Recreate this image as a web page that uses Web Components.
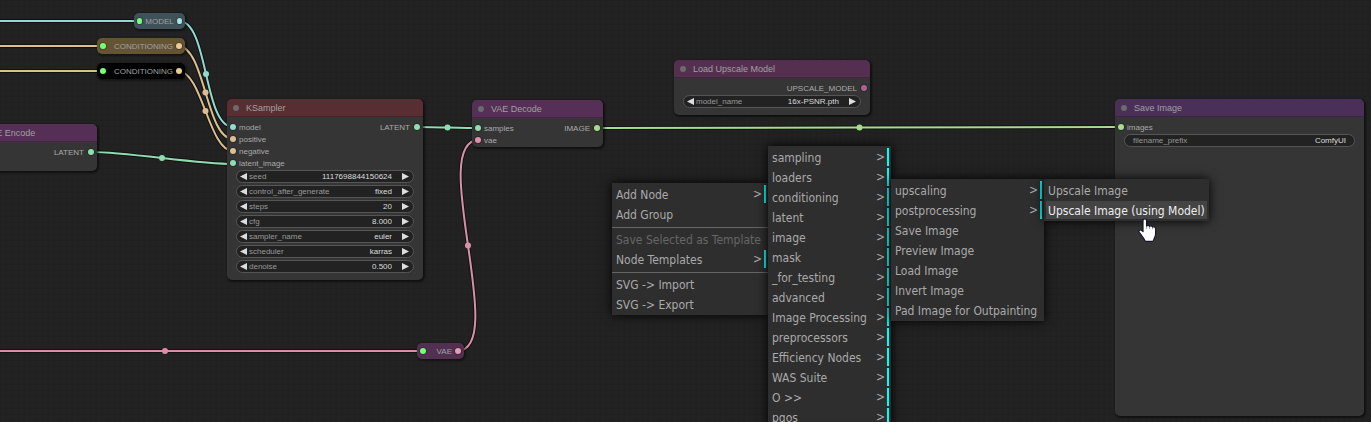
<!DOCTYPE html>
<html lang="en">
<head>
<meta charset="utf-8">
<title>ComfyUI</title>
<style>
html, body { margin: 0; height: 100%; background: #222; }
</style>
</head>
<body>
<graph-app></graph-app>
<script>
const define = (name, html, init) => {
  const tpl = document.createElement('template');
  tpl.innerHTML = html;
  customElements.define(name, class extends HTMLElement {
    connectedCallback() {
      if (this.shadowRoot) return;
      this.attachShadow({ mode: 'open' }).append(tpl.content.cloneNode(true));
      if (init) init(this, this.shadowRoot);
    }
  });
};

/* One input or output of a node */
define('node-slot', `
<style>
:host { display: flex; align-items: center; gap: 3px; height: 12px; padding: 0 3px; color: #aaa; }
:host([output]) { flex-direction: row-reverse; gap: 4px; }
i { width: 6px; height: 6px; border-radius: 50%; box-shadow: 0 0 0 1px rgba(0,0,0,.2); }
span { white-space: nowrap; padding-top: 2px; }
</style>
<i></i><span><slot></slot></span>`,
(el, root) => root.querySelector('i').style.background = el.getAttribute('color'));

/* Value row: number, combo or text */
define('node-widget', `
<style>
:host { display: flex; align-items: center; box-sizing: border-box; height: 13px; padding: 0 4px 0 3px; gap: 2px;
  background: #222; border: 1px solid #555; border-radius: 7px; color: #999; }
:host([type=text]) { padding: 0 8px; }
button { width: 7px; height: 7px; flex: none; padding: 0; border: 0; background: #ddd; clip-path: polygon(0 0, 100% 50%, 0 100%); }
button.prev { clip-path: polygon(100% 0, 0 50%, 100% 100%); }
:host([type=text]) button { display: none; }
label { flex: none; }
input, select { flex: 1; min-width: 0; width: 0; height: 11px; margin: 0; padding: 0; border: 0; outline: 0; background: none;
  appearance: none; color: #ddd; font: inherit; line-height: 11px; text-align: right; text-align-last: right; }
.next { margin-left: 8px; }
</style>
<button class="prev" aria-label="Previous"></button><label for="v"></label><button class="next" aria-label="Next"></button>`,
(el, root) => {
  const label = root.querySelector('label');
  label.textContent = el.getAttribute('name');
  const value = el.getAttribute('value');
  let field;
  if (el.getAttribute('type') === 'combo') {
    field = document.createElement('select');
    field.add(new Option(value, value));
  } else {
    field = document.createElement('input');
    field.type = 'text';
    field.setAttribute('value', value);
  }
  field.id = 'v';
  label.after(field);
});

/* Expanded node */
define('graph-node', `
<style>
:host { display: flex; flex-direction: column; box-sizing: border-box; overflow: hidden; background: #353535;
  border-radius: 5px; box-shadow: 1px 1px 2px 1px rgba(0,0,0,.5); font: 8px/12px "Liberation Sans", Arial, sans-serif; }
header { display: flex; align-items: center; gap: 7px; height: 18px; padding: 0 6px; background: var(--title); color: #a0a0a0;
  font-size: 9px; border-bottom: 1px solid rgba(0,0,0,.2); box-sizing: border-box; flex: none; }
header i { width: 6px; height: 6px; border-radius: 50%; background: #6b6b6b; }
h2 { margin: 0; font: inherit; white-space: nowrap; }
.slots { display: flex; justify-content: space-between; padding: 4px 0 1px; }
.widgets { display: flex; flex-direction: column; gap: 2px; padding: 0 9px; }
</style>
<header><i></i><h2></h2></header>
<div class="slots"><div><slot name="in"></slot></div><div><slot name="out"></slot></div></div>
<div class="widgets"><slot></slot></div>`,
(el, root) => root.querySelector('h2').textContent = el.getAttribute('name'));

/* Collapsed reroute node */
define('reroute-node', `
<style>
:host { display: flex; align-items: center; justify-content: flex-end; gap: 3px; box-sizing: border-box; height: 16px; padding: 0 3px;
  border-radius: 5px; background: var(--body); box-shadow: 1px 1px 2px 1px rgba(0,0,0,.4); color: #a0a0a0; font: 8px/12px "Liberation Sans", Arial, sans-serif; }
i { width: 6px; height: 6px; border-radius: 50%; box-shadow: 0 0 0 1px rgba(0,0,0,.2); }
span { padding-top: 2px; }
.in { margin-right: auto; background: #7f7; }
.out { background: var(--slot); }
</style>
<i class="in"></i><span><slot></slot></span><i class="out"></i>`);

define('menu-item', `
<style>
:host { display: block; }
button { display: flex; justify-content: space-between; gap: 6px; box-sizing: border-box; width: 100%; height: 18px; padding: 0 2px;
  border: 0; background: none; color: #aaa; font: inherit; text-align: left; white-space: nowrap; line-height: 20px; }
:host([sub]) button { border-right: 2px solid #0ff; }
:host([sub]) button::after { content: ">"; line-height: 18px; }
:host([off]) button { color: #666; }
:host([active]) button { background: #444; color: #eee; }
</style>
<button role="menuitem"><span><slot></slot></span></button>`,
(el, root) => { if (el.hasAttribute('off')) root.querySelector('button').setAttribute('aria-disabled', 'true'); });

define('menu-line', `<style>:host { display: block; height: 2px; margin: 0 -2px; border-bottom: 1px solid #666; }</style>`);

define('context-menu', `
<style>
:host { display: flex; flex-direction: column; gap: 2px; box-sizing: border-box; padding: 2px; background: #2e2e2e;
  box-shadow: 0 0 10px #000; font: 12px/18px "DejaVu Sans Condensed", Tahoma, sans-serif; }
</style>
<slot></slot>`);

define('hand-cursor', `
<style>:host { display: block; width: 20px; height: 25px; } svg { display: block; }</style>
<svg width="20" height="25" viewBox="0 0 20 25" aria-hidden="true">
<path d="M5 2.800C5 .4 8.600.4 8.600 2.800V8c.7-.8 2.500-.7 3 .4.8-.8 2.500-.6 3 .7 1-.7 3 0 3 1.700v5.200c0 1.800-.6 2.800-1.300 4-.6 1.100-.4 3.400-1.700 3.400H8c-1.200 0-1.400-1.600-2.200-2.800L1.300 14.400C.2 12.600 2 11.100 3.400 12.200L5 13.500z" fill="#fff" stroke="#16162a" stroke-width="1.200" stroke-linejoin="round"/>
<path d="M8.600 8v2.800M11.600 8.600v2.400M14.600 9.300v2" stroke="#16162a" stroke-opacity=".6" stroke-width=".7" fill="none"/>
</svg>`);

/* Cables between slots, with a dot at the middle of each */
define('graph-links', `
<style>:host { display: block; } svg { display: block; width: 100%; height: 100%; overflow: visible; }</style>
<svg aria-hidden="true"></svg>`,
(el, root) => {
  const links = [
    [-60, 21, 140, 21, '#92d9d0'], [-60, 46, 103, 46, '#dcbf90'], [-60, 71, 103, 71, '#dcbf90'],
    [179, 21, 233, 127, '#92d9d0'], [178, 46, 233, 139, '#dcbf90'], [178, 71, 233, 151, '#dcbf90'],
    [91, 152, 233, 164, '#8fdcb0'], [416, 127, 479, 128, '#8fdcb0'], [598, 128, 1121, 127, '#a6dc90'],
    [-93, 351, 423, 351, '#d890a8'], [457, 351, 479, 140, '#d890a8']
  ];
  root.querySelector('svg').innerHTML = links.map(([x1, y1, x2, y2, c]) => {
    const d = Math.hypot(x2 - x1, y2 - y1) / 4;
    const p = `M${x1} ${y1}C${x1 + d} ${y1} ${x2 - d} ${y2} ${x2} ${y2}`;
    const dot = (x1 + x2) / 2 > 100 ? `<circle cx="${(x1 + x2) / 2}" cy="${(y1 + y2) / 2}" r="3" fill="${c}"/>` : '';
    return `<path d="${p}" fill="none" stroke="#000" stroke-opacity=".5" stroke-width="4"/><path d="${p}" fill="none" stroke="${c}" stroke-width="2"/>${dot}`;
  }).join('');
});

define('graph-app', `
<style>
:host { display: block; position: relative; height: 100vh; overflow: hidden; background-color: #222;
  background-image: repeating-linear-gradient(90deg, #202020 0 1px, transparent 1px 6px), repeating-linear-gradient(#202020 0 1px, transparent 1px 6px); }
/* The graph is a free canvas: every node and menu carries its own place on it */
graph-links { position: absolute; inset: 0; }
graph-node, reroute-node, context-menu, hand-cursor { position: absolute; }
#model { left: 134px; top: 13px; width: 51px; --body: #3f5159; --slot: #a8e0e0; }
#pos { left: 97px; top: 38px; width: 88px; --body: #655434; --slot: #ecca98; }
#neg { left: 97px; top: 63px; width: 88px; --body: #000; --slot: #ecca98; }
#vae { left: 417px; top: 343px; width: 47px; --body: #523052; --slot: #e0a0b0; }
#encode { left: -34px; top: 124px; width: 131px; height: 47px; --title: #552f55; }
#sampler { left: 227px; top: 99px; width: 196px; height: 181px; --title: #592e32; }
#decode { left: 472px; top: 100px; width: 131px; height: 47px; --title: #552f55; }
#loader { left: 674px; top: 60px; width: 196px; height: 55px; --title: #552f50; }
#save { left: 1115px; top: 99px; width: 249px; height: 317px; --title: #4a2f58; }
#m1 { left: 612px; top: 183px; width: 156px; }
#m2 { left: 768px; top: 146px; width: 123px; }
#m3 { left: 891px; top: 179px; width: 153px; }
#m4 { left: 1044px; top: 179px; width: 165px; }
hand-cursor { left: 1138px; top: 218px; }
</style>
<graph-links></graph-links>
<reroute-node id="model">MODEL</reroute-node>
<reroute-node id="pos">CONDITIONING</reroute-node>
<reroute-node id="neg">CONDITIONING</reroute-node>
<reroute-node id="vae">VAE</reroute-node>
<graph-node id="encode" name="VAE Encode"><node-slot slot="out" output color="#8fe0b0">LATENT</node-slot></graph-node>
<graph-node id="sampler" name="KSampler">
  <node-slot slot="in" color="#92d9d0">model</node-slot>
  <node-slot slot="in" color="#dcbf90">positive</node-slot>
  <node-slot slot="in" color="#dcbf90">negative</node-slot>
  <node-slot slot="in" color="#8fdcb0">latent_image</node-slot>
  <node-slot slot="out" output color="#8fdcb0">LATENT</node-slot>
  <node-widget type="number" name="seed" value="1117698844150624"></node-widget>
  <node-widget type="combo" name="control_after_generate" value="fixed"></node-widget>
  <node-widget type="number" name="steps" value="20"></node-widget>
  <node-widget type="number" name="cfg" value="8.000"></node-widget>
  <node-widget type="combo" name="sampler_name" value="euler"></node-widget>
  <node-widget type="combo" name="scheduler" value="karras"></node-widget>
  <node-widget type="number" name="denoise" value="0.500"></node-widget>
</graph-node>
<graph-node id="decode" name="VAE Decode">
  <node-slot slot="in" color="#8fdcb0">samples</node-slot>
  <node-slot slot="in" color="#e090a8">vae</node-slot>
  <node-slot slot="out" output color="#a6dc90">IMAGE</node-slot>
</graph-node>
<graph-node id="loader" name="Load Upscale Model">
  <node-slot slot="out" output color="#b06090">UPSCALE_MODEL</node-slot>
  <node-widget type="combo" name="model_name" value="16x-PSNR.pth"></node-widget>
</graph-node>
<graph-node id="save" name="Save Image">
  <node-slot slot="in" color="#a6dc90">images</node-slot>
  <node-widget type="text" name="filename_prefix" value="ComfyUI"></node-widget>
</graph-node>
<context-menu id="m1" role="menu">
  <menu-item sub>Add Node</menu-item><menu-item>Add Group</menu-item><menu-line></menu-line>
  <menu-item off>Save Selected as Template</menu-item><menu-item sub>Node Templates</menu-item><menu-line></menu-line>
  <menu-item>SVG -&gt; Import</menu-item><menu-item>SVG -&gt; Export</menu-item>
</context-menu>
<context-menu id="m2" role="menu">
  <menu-item sub>sampling</menu-item><menu-item sub>loaders</menu-item><menu-item sub>conditioning</menu-item>
  <menu-item sub>latent</menu-item><menu-item sub>image</menu-item><menu-item sub>mask</menu-item>
  <menu-item sub>_for_testing</menu-item><menu-item sub>advanced</menu-item><menu-item sub>Image Processing</menu-item>
  <menu-item sub>preprocessors</menu-item><menu-item sub>Efficiency Nodes</menu-item><menu-item sub>WAS Suite</menu-item>
  <menu-item sub>O &gt;&gt;</menu-item><menu-item sub>pqos</menu-item>
</context-menu>
<context-menu id="m3" role="menu">
  <menu-item sub>upscaling</menu-item><menu-item sub>postprocessing</menu-item><menu-item>Save Image</menu-item>
  <menu-item>Preview Image</menu-item><menu-item>Load Image</menu-item><menu-item>Invert Image</menu-item>
  <menu-item>Pad Image for Outpainting</menu-item>
</context-menu>
<context-menu id="m4" role="menu">
  <menu-item>Upscale Image</menu-item><menu-item active>Upscale Image (using Model)</menu-item>
</context-menu>
<hand-cursor></hand-cursor>`);
</script>
</body>
</html>
